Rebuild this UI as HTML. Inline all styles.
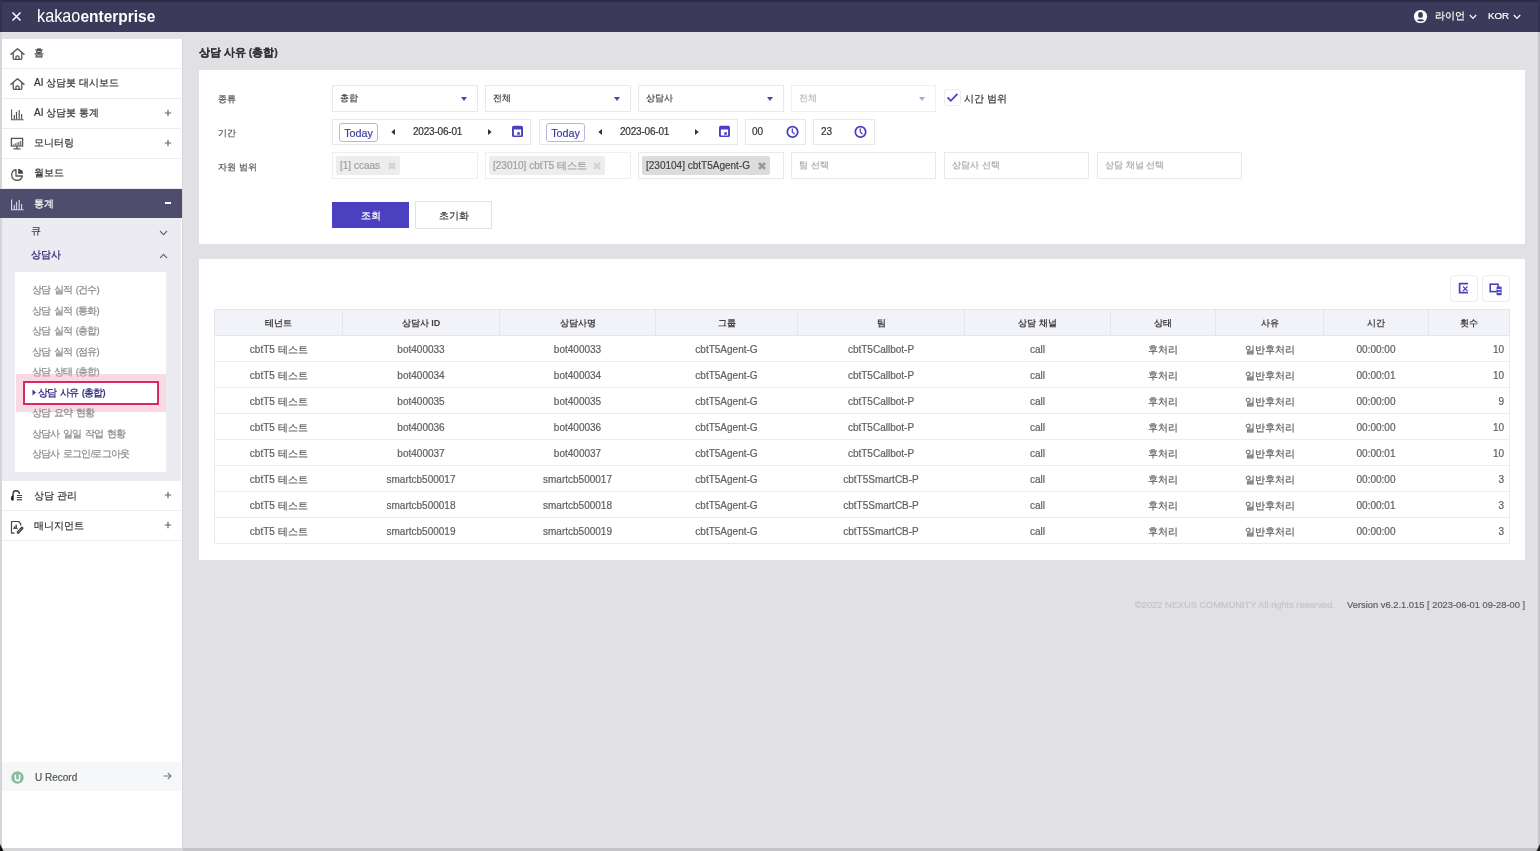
<!DOCTYPE html>
<html><head><meta charset="utf-8">
<style>
*{box-sizing:border-box;margin:0;padding:0}
html,body{width:1540px;height:851px;overflow:hidden}
body{position:relative;background:#e1e0e5;font-family:"Liberation Sans",sans-serif;color:#333}
.a{position:absolute}
.t{position:absolute;white-space:nowrap;line-height:14px}
#hdr{left:0;top:0;width:1540px;height:32px;background:#3b3a5b}
#hdrtop{left:0;top:0;width:1540px;height:2px;background:#2d2c47}
#side{left:0;top:39px;width:183px;height:812px;background:#fff;border-right:1px solid #d6d6da}
#lb{left:0;top:32px;width:2px;height:819px;background:#d5d5d8}
.mi{position:absolute;left:2px;width:179px;height:30px;border-bottom:1px solid #ebebef}
.mi .lbl{position:absolute;left:32px;top:8px;font-size:11px;line-height:14px;color:#333}
.mi .pl{position:absolute;left:162px;top:7px;font-size:12px;color:#666}
.panel{position:absolute;background:#fff}
.box{position:absolute;border:1px solid #e9e9eb;background:#fff;height:27px}
.sel .v{position:absolute;left:7px;top:4.5px;font-size:9px;line-height:14px;color:#444;white-space:nowrap}
.sel .ar{position:absolute;right:10px;top:11px;width:0;height:0;border-left:3px solid transparent;border-right:3px solid transparent;border-top:4px solid #4a40c0}
.flbl{position:absolute;left:218px;font-size:9px;line-height:14px;color:#555;white-space:nowrap}
.today{position:absolute;left:6px;top:3px;width:39px;height:19px;border:1px solid #b9b4e2;border-radius:3px;color:#3e3a9e;font-size:10.75px;line-height:19px;text-align:center}
.chip{position:absolute;left:3px;top:3px;height:19px;border-radius:2px;background:#ededed;color:#a0a0a0;font-size:10px;line-height:19px;padding-left:4px;white-space:nowrap}
.chip svg{position:absolute;right:4px;top:6px}
table{position:absolute;left:214px;top:309px;border-collapse:collapse;table-layout:fixed;width:1295px}
th{height:26px;-webkit-text-stroke:0;background:#f2f3f8;border:1px solid #e6e6ea;font-size:9px;font-weight:bold;color:#444;text-align:center;padding-top:2px}
td{height:26px;padding-top:2px;border-top:1px solid #ebebee;border-bottom:1px solid #ebebee;font-size:10px;color:#606060;text-align:center;white-space:nowrap}
tr td:first-child{border-left:1px solid #ebebee}
tr td:last-child{border-right:1px solid #ebebee;text-align:right;padding-right:5px}
.sm{font-size:10px;color:#333}
.sub{position:absolute;left:32px;font-size:9.5px;letter-spacing:-0.8px;word-spacing:1.6px;line-height:14px;color:#8a8a8a;white-space:nowrap}
#root{position:absolute;left:0;top:0;width:1540px;height:851px;will-change:transform;background:#e1e0e5;-webkit-text-stroke:0.2px currentColor}
</style></head><body><div id="root">

<!-- header -->
<div id="hdr" class="a"></div>
<div id="hdrtop" class="a"></div>
<div class="a" style="left:1538px;top:0;width:2px;height:32px;background:#32314f"></div>
<div class="a" style="left:0;top:0;width:2px;height:32px;background:#32314f"></div>
<svg class="a" style="left:11px;top:11px" width="11" height="11" viewBox="0 0 11 11"><path d="M1.5 1.5L9.5 9.5M9.5 1.5L1.5 9.5" stroke="#fff" stroke-width="1.5" fill="none"/></svg>
<div class="t" style="left:37px;top:3px;line-height:22px;color:#fff;-webkit-text-stroke:0;transform:scaleY(1.12);transform-origin:0 0"><span style="font-size:16.25px">kakao</span><b style="font-size:15.5px">enterprise</b></div>
<svg class="a" style="left:1413px;top:9px" width="15" height="15" viewBox="0 0 15 15"><circle cx="7.5" cy="7.5" r="6.6" fill="#fff"/><ellipse cx="7.5" cy="5.9" rx="2.4" ry="2.9" fill="#3b3a5b"/><ellipse cx="7.5" cy="11.3" rx="3.4" ry="1.15" fill="#3b3a5b"/></svg>
<div class="t" style="left:1435px;top:9px;font-size:10px;color:#fff">라이언</div>
<svg class="a" style="left:1469px;top:14px" width="8" height="6" viewBox="0 0 8 6"><path d="M0.8 1L4 4.4L7.2 1" stroke="#fff" stroke-width="1.2" fill="none"/></svg>
<div class="t" style="left:1488px;top:9px;font-size:9.75px;color:#fff">KOR</div>
<svg class="a" style="left:1513px;top:14px" width="8" height="6" viewBox="0 0 8 6"><path d="M0.8 1L4 4.4L7.2 1" stroke="#fff" stroke-width="1.2" fill="none"/></svg>

<!-- sidebar -->
<div id="side" class="a"></div>
<div id="lb" class="a"></div>
<div class="mi" style="top:39px"></div>
<div class="mi" style="top:69px"></div>
<div class="mi" style="top:99px"></div>
<div class="mi" style="top:129px"></div>
<div class="mi" style="top:159px"></div>
<svg class="a" style="left:10px;top:47px" width="16" height="14" viewBox="0 0 16 14"><path d="M1 7.3L7.5 1.8L14 7.3" stroke="#555" stroke-width="1.5" fill="none" stroke-linecap="round" stroke-linejoin="round"/><path d="M3.2 6V11.6Q3.2 12.4 4 12.4H11Q11.8 12.4 11.8 11.6V6" stroke="#555" stroke-width="1.3" fill="none"/><path d="M5.9 12.4V10.4A1.6 1.6 0 0 1 9.1 10.4V12.4" stroke="#555" stroke-width="1.3" fill="none"/></svg><div class="t sm" style="left:34px;top:46px">홈</div>
<svg class="a" style="left:10px;top:77px" width="16" height="14" viewBox="0 0 16 14"><path d="M1 7.3L7.5 1.8L14 7.3" stroke="#555" stroke-width="1.5" fill="none" stroke-linecap="round" stroke-linejoin="round"/><path d="M3.2 6V11.6Q3.2 12.4 4 12.4H11Q11.8 12.4 11.8 11.6V6" stroke="#555" stroke-width="1.3" fill="none"/><path d="M5.9 12.4V10.4A1.6 1.6 0 0 1 9.1 10.4V12.4" stroke="#555" stroke-width="1.3" fill="none"/></svg><div class="t sm" style="left:34px;top:76px">AI 상담봇 대시보드</div>
<svg class="a" style="left:10px;top:108.5px" width="15" height="12" viewBox="0 0 15 12"><path d="M1.6 0.6V10.8H13.6" stroke="#555" stroke-width="1.1" fill="none"/><path d="M4.3 10.2V5.9M6.5 10.2V2.7M9.2 10.2V1M11.6 10.2V5.1" stroke="#555" stroke-width="1.2" fill="none"/></svg><div class="t sm" style="left:34px;top:106px">AI 상담봇 통계</div><svg class="a" style="left:164px;top:109px" width="8" height="8" viewBox="0 0 8 8"><path d="M4 0.8V7.2M0.8 4H7.2" stroke="#666" stroke-width="1.2"/></svg>
<svg class="a" style="left:10px;top:137px" width="14" height="13" viewBox="0 0 14 13"><rect x="1.4" y="1.4" width="11.2" height="7.6" stroke="#555" stroke-width="1.3" fill="none"/><path d="M3.5 8V7.4M5.3 8V6.4M7.1 8V5.6M8.9 8V4.8M10.7 8V4" stroke="#555" stroke-width="1" fill="none"/><path d="M7 9V11.2M3.5 11.8H10.5" stroke="#555" stroke-width="1.3" fill="none"/></svg><div class="t sm" style="left:34px;top:136px">모니터링</div><svg class="a" style="left:164px;top:139px" width="8" height="8" viewBox="0 0 8 8"><path d="M4 0.8V7.2M0.8 4H7.2" stroke="#666" stroke-width="1.2"/></svg>
<svg class="a" style="left:10px;top:168px" width="14" height="14" viewBox="0 0 14 14"><path d="M6 1.6A5.4 5.4 0 1 0 12.4 8H6Z" stroke="#555" stroke-width="1.3" fill="none" stroke-linejoin="round"/><path d="M8.2 0.8A5.2 5.2 0 0 1 13.2 5.8H8.2Z" fill="#444"/></svg><div class="t sm" style="left:34px;top:166px">월보드</div>
<div class="a" style="left:0;top:189px;width:182px;height:29px;background:#4e4d6d"></div>
<svg class="a" style="left:10px;top:198.5px" width="15" height="12" viewBox="0 0 15 12"><path d="M1.6 0.6V10.8H13.6" stroke="#e0e0ea" stroke-width="1.1" fill="none"/><path d="M4.3 10.2V5.9M6.5 10.2V2.7M9.2 10.2V1M11.6 10.2V5.1" stroke="#d0d0dc" stroke-width="1.2" fill="none"/></svg><div class="t sm" style="left:34px;top:197px;color:#fff">통계</div>
<div class="a" style="left:165px;top:202px;width:6px;height:1.5px;background:#fff"></div>
<div class="a" style="left:2px;top:218px;width:179px;height:263px;background:#ecebf1"></div>
<div class="t sm" style="left:31px;top:224px;color:#444">큐</div>
<svg class="a" style="left:159px;top:230px" width="9" height="6" viewBox="0 0 9 6"><path d="M1 1L4.5 4.6L8 1" stroke="#666" stroke-width="1.1" fill="none"/></svg>
<div class="t sm" style="left:31px;top:248px;color:#3e3a86;font-weight:bold;-webkit-text-stroke:0">상담사</div>
<svg class="a" style="left:159px;top:253px" width="9" height="6" viewBox="0 0 9 6"><path d="M1 5L4.5 1.4L8 5" stroke="#666" stroke-width="1.1" fill="none"/></svg>
<div class="a" style="left:15px;top:272px;width:151px;height:200px;background:#fff"></div>
<div class="sub" style="top:283px">상담 실적 (건수)</div>
<div class="sub" style="top:303.5px">상담 실적 (통화)</div>
<div class="sub" style="top:324px">상담 실적 (총합)</div>
<div class="sub" style="top:344.5px">상담 실적 (점유)</div>
<div class="sub" style="top:365px">상담 상태 (총합)</div>
<div class="a" style="left:16px;top:374px;width:150px;height:38px;background:rgba(240,170,195,0.45)"></div>
<div class="a" style="left:23px;top:381px;width:136px;height:24px;background:#fff;border:2px solid #d72a5f"></div>
<svg class="a" style="left:32px;top:389px" width="5" height="7" viewBox="0 0 5 7"><path d="M0.5 0.5L4 3.5L0.5 6.5Z" fill="#3e3a86"/></svg>
<div class="sub" style="left:38px;top:386px;color:#3e3a86;font-weight:bold;-webkit-text-stroke:0">상담 사유 (총합)</div>
<div class="sub" style="top:406px">상담 요약 현황</div>
<div class="sub" style="top:426.5px">상담사 일일 작업 현황</div>
<div class="sub" style="top:447px">상담사 로그인/로그아웃</div>
<div class="mi" style="top:481px"></div>
<div class="mi" style="top:511px"></div>
<svg class="a" style="left:10px;top:489px" width="14" height="13" viewBox="0 0 14 13"><path d="M3 7V5.5Q3 1.8 6 1.8Q8.6 1.8 9.4 4.4" stroke="#333" stroke-width="1.4" fill="none" stroke-linecap="round"/><path d="M1 8.6Q1 6.7 2.5 6.7H3.7V11.6H2.5Q1 11.6 1 10Z" fill="#222"/><path d="M6.9 6.5H12.1M6.9 8.5H12.1" stroke="#444" stroke-width="1.2"/><path d="M6.9 10.7H12.1" stroke="#666" stroke-width="1.5"/></svg><div class="t sm" style="left:34px;top:489px">상담 관리</div><svg class="a" style="left:164px;top:491px" width="8" height="8" viewBox="0 0 8 8"><path d="M4 0.8V7.2M0.8 4H7.2" stroke="#666" stroke-width="1.2"/></svg>
<svg class="a" style="left:10px;top:520px" width="14" height="15" viewBox="0 0 14 15"><path d="M4.6 13.2H1.5V1.5H8.6L10.7 3.8V5.5" stroke="#444" stroke-width="1.2" fill="none" stroke-linejoin="round"/><path d="M3.2 8.4H7.7" stroke="#333" stroke-width="0.9"/><path d="M4.6 8.4V6.3M6.2 8.4V4.4" stroke="#444" stroke-width="1.3"/><path d="M8.2 12.3L11.9 8.2" stroke="#444" stroke-width="3" stroke-linecap="round"/><path d="M8.5 11.9L11.6 8.6" stroke="#ddd" stroke-width="0.8" stroke-dasharray="1 0.7"/></svg><div class="t sm" style="left:34px;top:519px">매니지먼트</div><svg class="a" style="left:164px;top:521px" width="8" height="8" viewBox="0 0 8 8"><path d="M4 0.8V7.2M0.8 4H7.2" stroke="#666" stroke-width="1.2"/></svg>
<div class="a" style="left:2px;top:762px;width:179px;height:29px;background:#f6f7f9"></div>
<svg class="a" style="left:11px;top:771px" width="13" height="13" viewBox="0 0 13 13"><circle cx="6.5" cy="6.5" r="6.2" fill="#8dba9f"/><path d="M4.4 3.6V7.4Q4.4 9.6 6.5 9.6Q8.6 9.6 8.6 7.4V3.6" stroke="#fff" stroke-width="1.5" fill="none"/></svg>
<div class="t" style="left:35px;top:770.5px;font-size:10px;color:#555">U Record</div>
<svg class="a" style="left:163px;top:772px" width="9" height="8" viewBox="0 0 9 8"><path d="M0.5 4H8M4.8 0.8L8 4L4.8 7.2" stroke="#777" stroke-width="1.1" fill="none"/></svg>


<!-- main -->
<div class="t" style="left:199px;top:44.5px;font-size:10.5px;font-weight:bold;color:#333">상담 사유 (총합)</div>
<div class="panel" style="left:199px;top:70px;width:1326px;height:174px"></div>
<div class="flbl" style="top:91.5px">종류</div>
<div class="flbl" style="top:125.5px">기간</div>
<div class="flbl" style="top:159.5px">자원 범위</div>
<div class="box sel" style="left:332px;top:85px;width:146px"><div class="v">총합</div><div class="ar"></div></div>
<div class="box sel" style="left:485px;top:85px;width:146px"><div class="v">전체</div><div class="ar"></div></div>
<div class="box sel" style="left:638px;top:85px;width:146px"><div class="v">상담사</div><div class="ar"></div></div>
<div class="box sel" style="left:791px;top:85px;width:145px;border-color:#efefef"><div class="v" style="color:#bbb">전체</div><div class="ar" style="border-top-color:#aaa4e6"></div></div>
<div class="a" style="left:944px;top:89px;width:17px;height:17px;border:1px solid #ececec;border-radius:3px;background:#fff"></div>
<svg class="a" style="left:946px;top:92px" width="13" height="11" viewBox="0 0 13 11"><path d="M1.6 5.4L4.8 8.8L11.4 1.8" stroke="#4a40c0" stroke-width="1.8" fill="none"/></svg>
<div class="t" style="left:964px;top:91.5px;font-size:9.75px;color:#333">시간 범위</div>
<div class="box" style="left:332px;top:119px;width:199px;height:26px"><div class="today">Today</div></div>
<svg class="a" style="left:391px;top:129px" width="4" height="6" viewBox="0 0 4 6"><path d="M4 0V6L0.3 3Z" fill="#333"/></svg><div class="t" style="left:413px;top:125px;font-size:10px;letter-spacing:-0.2px;color:#333">2023-06-01</div><svg class="a" style="left:488px;top:129px" width="4" height="6" viewBox="0 0 4 6"><path d="M0 0V6L3.7 3Z" fill="#333"/></svg><svg class="a" style="left:512px;top:125px" width="11" height="13" viewBox="0 0 11 13"><rect x="0" y="0.7" width="11" height="11.4" rx="1.7" fill="#4a40c0"/><rect x="1.9" y="4.5" width="7.2" height="6" fill="#fff"/><rect x="5.3" y="7.2" width="2.5" height="2.6" fill="#4a40c0"/></svg>
<div class="box" style="left:539px;top:119px;width:199px;height:26px"><div class="today">Today</div></div>
<svg class="a" style="left:598px;top:129px" width="4" height="6" viewBox="0 0 4 6"><path d="M4 0V6L0.3 3Z" fill="#333"/></svg><div class="t" style="left:620px;top:125px;font-size:10px;letter-spacing:-0.2px;color:#333">2023-06-01</div><svg class="a" style="left:695px;top:129px" width="4" height="6" viewBox="0 0 4 6"><path d="M0 0V6L3.7 3Z" fill="#333"/></svg><svg class="a" style="left:719px;top:125px" width="11" height="13" viewBox="0 0 11 13"><rect x="0" y="0.7" width="11" height="11.4" rx="1.7" fill="#4a40c0"/><rect x="1.9" y="4.5" width="7.2" height="6" fill="#fff"/><rect x="5.3" y="7.2" width="2.5" height="2.6" fill="#4a40c0"/></svg>
<div class="box" style="left:745px;top:119px;width:61px;height:26px"><div class="t" style="left:6px;top:5px;font-size:10px;color:#333">00</div></div><svg class="a" style="left:786px;top:125px" width="13" height="13" viewBox="0 0 13 13"><circle cx="6.5" cy="6.9" r="5.2" stroke="#4a40c0" stroke-width="1.8" fill="none"/><path d="M6.3 4V7L8.3 8.9" stroke="#4a40c0" stroke-width="1.3" fill="none" stroke-linecap="round"/></svg>
<div class="box" style="left:813px;top:119px;width:62px;height:26px"><div class="t" style="left:7px;top:5px;font-size:10px;color:#333">23</div></div><svg class="a" style="left:854px;top:125px" width="13" height="13" viewBox="0 0 13 13"><circle cx="6.5" cy="6.9" r="5.2" stroke="#4a40c0" stroke-width="1.8" fill="none"/><path d="M6.3 4V7L8.3 8.9" stroke="#4a40c0" stroke-width="1.3" fill="none" stroke-linecap="round"/></svg>
<div class="box" style="left:332px;top:152px;width:146px;border-color:#efefef"><div class="chip" style="width:64px">[1] ccaas<svg width="8" height="8" viewBox="0 0 8 8"><path d="M1 1L7 7M7 1L1 7" stroke="#d4d4d4" stroke-width="2.5"/></svg></div></div>
<div class="box" style="left:485px;top:152px;width:146px;border-color:#efefef"><div class="chip" style="width:116px">[23010] cbtT5 테스트<svg width="8" height="8" viewBox="0 0 8 8"><path d="M1 1L7 7M7 1L1 7" stroke="#d4d4d4" stroke-width="2.5"/></svg></div></div>
<div class="box" style="left:638px;top:152px;width:146px"><div class="chip" style="width:128px;background:#dcdcdc;color:#444">[230104] cbtT5Agent-G<svg width="8" height="8" viewBox="0 0 8 8"><path d="M1 1L7 7M7 1L1 7" stroke="#9a9a9a" stroke-width="2.5"/></svg></div></div>
<div class="box sel" style="left:791px;top:152px;width:145px"><div class="v" style="color:#aaa">팀 선택</div></div>
<div class="box sel" style="left:944px;top:152px;width:145px"><div class="v" style="color:#aaa">상담사 선택</div></div>
<div class="box sel" style="left:1097px;top:152px;width:145px"><div class="v" style="color:#aaa">상담 채널 선택</div></div>
<div class="a" style="left:332px;top:202px;width:77px;height:26px;background:#4a40c0;color:#fff;font-size:10px;line-height:28px;text-align:center">조회</div>
<div class="a" style="left:415px;top:201px;width:77px;height:28px;background:#fff;border:1px solid #e3e3e6;color:#333;font-size:10px;line-height:28px;text-align:center">초기화</div>

<div class="panel" style="left:199px;top:259px;width:1326px;height:301px"></div>
<div class="a" style="left:1450px;top:275px;width:28px;height:27px;border:1px solid #ebebee;border-radius:4px;background:#fff"></div><svg class="a" style="left:1458px;top:282px" width="12" height="12" viewBox="0 0 12 12"><path d="M10 1.6H1.6V10.6H10" stroke="#4a40c0" stroke-width="1.7" fill="none"/><path d="M5 4.5L9.5 9M9.5 4.5L5 9" stroke="#4a40c0" stroke-width="1.1" fill="none"/></svg>
<div class="a" style="left:1482px;top:275px;width:28px;height:27px;border:1px solid #ebebee;border-radius:4px;background:#fff"></div><svg class="a" style="left:1489px;top:282.7px" width="14" height="13" viewBox="0 0 14 13"><rect x="1.2" y="1.2" width="7.8" height="7.4" stroke="#4a40c0" stroke-width="1.6" fill="#fff"/><rect x="7.6" y="3.6" width="5" height="8.6" rx="0.8" fill="#4a40c0"/><path d="M8.4 6.6H11.8M8.4 9.4H11.8" stroke="#fff" stroke-width="1"/></svg>
<table><colgroup><col style="width:128px"><col style="width:157px"><col style="width:156px"><col style="width:142px"><col style="width:167px"><col style="width:146px"><col style="width:105px"><col style="width:108px"><col style="width:105px"><col style="width:81px"></colgroup><tr><th>테넌트</th><th>상담사 ID</th><th>상담사명</th><th>그룹</th><th>팀</th><th>상담 채널</th><th>상태</th><th>사유</th><th>시간</th><th>횟수</th></tr>
<tr><td>cbtT5 테스트</td><td>bot400033</td><td>bot400033</td><td>cbtT5Agent-G</td><td>cbtT5Callbot-P</td><td>call</td><td>후처리</td><td>일반후처리</td><td>00:00:00</td><td>10</td></tr>
<tr><td>cbtT5 테스트</td><td>bot400034</td><td>bot400034</td><td>cbtT5Agent-G</td><td>cbtT5Callbot-P</td><td>call</td><td>후처리</td><td>일반후처리</td><td>00:00:01</td><td>10</td></tr>
<tr><td>cbtT5 테스트</td><td>bot400035</td><td>bot400035</td><td>cbtT5Agent-G</td><td>cbtT5Callbot-P</td><td>call</td><td>후처리</td><td>일반후처리</td><td>00:00:00</td><td>9</td></tr>
<tr><td>cbtT5 테스트</td><td>bot400036</td><td>bot400036</td><td>cbtT5Agent-G</td><td>cbtT5Callbot-P</td><td>call</td><td>후처리</td><td>일반후처리</td><td>00:00:00</td><td>10</td></tr>
<tr><td>cbtT5 테스트</td><td>bot400037</td><td>bot400037</td><td>cbtT5Agent-G</td><td>cbtT5Callbot-P</td><td>call</td><td>후처리</td><td>일반후처리</td><td>00:00:01</td><td>10</td></tr>
<tr><td>cbtT5 테스트</td><td>smartcb500017</td><td>smartcb500017</td><td>cbtT5Agent-G</td><td>cbtT5SmartCB-P</td><td>call</td><td>후처리</td><td>일반후처리</td><td>00:00:00</td><td>3</td></tr>
<tr><td>cbtT5 테스트</td><td>smartcb500018</td><td>smartcb500018</td><td>cbtT5Agent-G</td><td>cbtT5SmartCB-P</td><td>call</td><td>후처리</td><td>일반후처리</td><td>00:00:01</td><td>3</td></tr>
<tr><td>cbtT5 테스트</td><td>smartcb500019</td><td>smartcb500019</td><td>cbtT5Agent-G</td><td>cbtT5SmartCB-P</td><td>call</td><td>후처리</td><td>일반후처리</td><td>00:00:00</td><td>3</td></tr>
</table>
<div class="t" style="left:1135px;top:598px;font-size:9.25px;color:#c4c4ca">©2022 NEXUS COMMUNITY All rights reserved.</div>
<div class="t" style="left:1347px;top:598px;font-size:9.35px;color:#5f5f66">Version v6.2.1.015 [ 2023-06-01 09-28-00 ]</div>


<!-- window frame -->
<div class="a" style="left:1538px;top:32px;width:2px;height:819px;background:#c6c5ca"></div>
<div class="a" style="left:0;top:848px;width:183px;height:3px;background:#d6d6d8"></div><div class="a" style="left:183px;top:848px;width:1357px;height:3px;background:#c5c4c9"></div>
<svg class="a" style="left:0;top:844px" width="4" height="7" viewBox="0 0 4 7"><path d="M0 0L3.5 7H0Z" fill="#111"/></svg><svg class="a" style="left:1536px;top:844px" width="4" height="7" viewBox="0 0 4 7"><path d="M4 0L0.5 7H4Z" fill="#222"/></svg>
</div></body></html>
